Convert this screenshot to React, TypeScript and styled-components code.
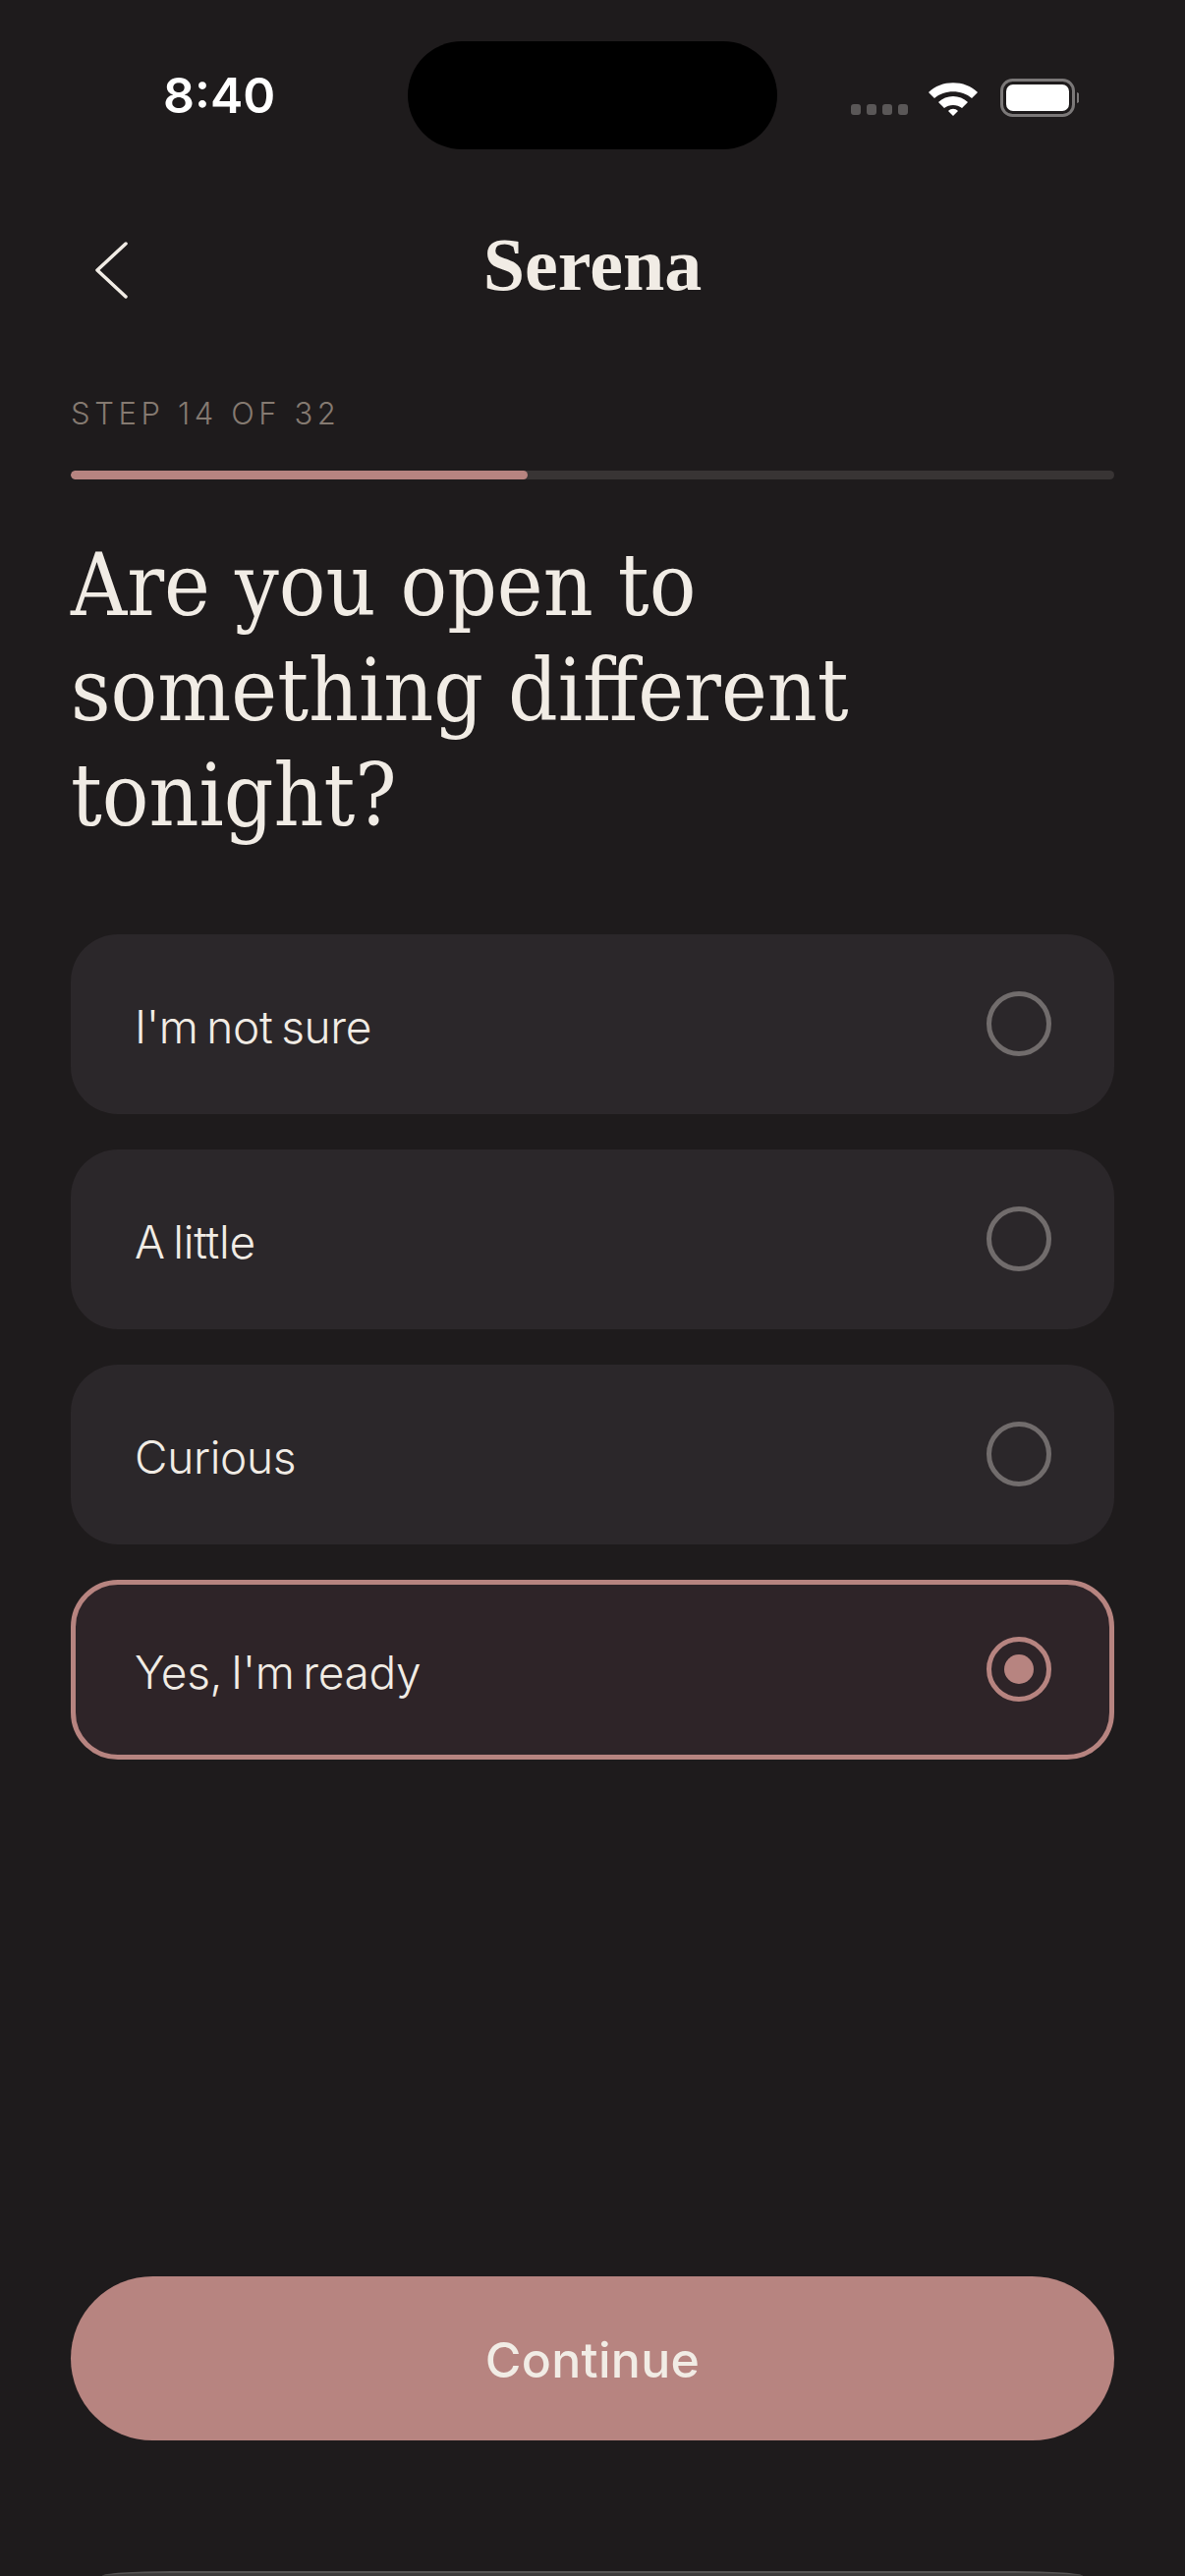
import React from 'react';
import styled, { createGlobalStyle } from 'styled-components';

const palette = {
    bg: '#1e1b1c',
    card: '#2b272a',
    cardActive: '#2e2428',
    rose: '#b78480',
    cream: '#f1ece5',
    muted: '#857a71',
    track: '#383434',
    ring: '#716c6c',
};

const GlobalStyle = createGlobalStyle`
    html, body {
        margin: 0;
        padding: 0;
        background: ${palette.bg};
    }
`;

const Screen = styled.div`
    width: 1206px;
    height: 2622px;
    overflow: hidden;
    background: ${palette.bg};
    display: flex;
    flex-direction: column;
    font-family: Inter, "Liberation Sans", sans-serif;
    color: ${palette.cream};
`;

const StatusBar = styled.div`
    height: 152px;
    padding-top: 42px;
    box-sizing: border-box;
    display: grid;
    grid-template-columns: 415px 376px 1fr;
    flex-shrink: 0;
`;

const Clock = styled.div`
    font-family: Inter, sans-serif;
    font-size: 50px;
    line-height: 110px;
    font-weight: 600;
    color: #fff;
    padding-left: 166px;
`;

const Island = styled.div`
    height: 110px;
    border-radius: 55px;
    background: #000;
`;

const StatusIcons = styled.div`
    display: flex;
    align-items: flex-start;
    padding: 38px 0 0 73px;
`;

const NavBar = styled.div`
    margin-top: 87px;
    padding: 0 72px;
    height: 60px;
    display: flex;
    align-items: center;
    justify-content: center;
    position: relative;
`;

const BackIcon = styled.svg`
    position: absolute;
    left: 96px;
    top: 6px;
`;

const Brand = styled.div`
    font-family: "Liberation Serif", serif;
    font-weight: 700;
    font-size: 76px;
    line-height: 60px;
`;

const StepLabel = styled.div`
    margin: 102px 72px 0;
    font-size: 31px;
    line-height: 40px;
    font-weight: 300;
    letter-spacing: 4.6px;
    color: ${palette.muted};
`;

const Track = styled.div`
    margin: 38px 72px 0;
    height: 9px;
    border-radius: 5px;
    background: ${palette.track};
    overflow: hidden;
`;

const Fill = styled.div`
    height: 100%;
    border-radius: 5px;
    background: ${palette.rose};
`;

const Question = styled.h1`
    margin: 54px 72px 0;
    font-family: "DejaVu Serif Condensed", "DejaVu Serif", serif;
    font-stretch: condensed;
    font-weight: 400;
    font-size: 88px;
    line-height: 107px;
    color: ${palette.cream};
`;

const Options = styled.div`
    margin: 88px 72px 0;
    display: flex;
    flex-direction: column;
    gap: 36px;
`;

const Option = styled.div<{ $selected?: boolean }>`
    height: 183px;
    box-sizing: border-box;
    border-radius: 48px;
    padding: 0 64px 0 65px;
    display: flex;
    align-items: center;
    justify-content: space-between;
    background: ${(p) => (p.$selected ? palette.cardActive : palette.card)};
    border: ${(p) => (p.$selected ? `5px solid ${palette.rose}` : 'none')};
    ${(p) => p.$selected && 'padding: 0 59px 0 60px;'}
`;

const OptionLabel = styled.span`
    font-size: 46px;
    font-weight: 300;
    letter-spacing: -0.3px;
    word-spacing: -4px;
    margin-top: 4px;
`;

const Radio = styled.span<{ $selected?: boolean }>`
    width: 66px;
    height: 66px;
    box-sizing: border-box;
    border-radius: 50%;
    border: 5px solid ${(p) => (p.$selected ? palette.rose : palette.ring)};
    display: flex;
    align-items: center;
    justify-content: center;
    margin-top: -1px;
`;

const RadioDot = styled.span`
    width: 30px;
    height: 30px;
    border-radius: 50%;
    background: ${palette.rose};
`;

const Spacer = styled.div`
    flex: 1;
`;

const ContinueButton = styled.button`
    margin: 0 72px;
    height: 167px;
    padding: 2px 0 0;
    flex-shrink: 0;
    border: none;
    border-radius: 84px;
    background: ${palette.rose};
    color: ${palette.cream};
    font-family: Inter, sans-serif;
    font-size: 50px;
    font-weight: 500;
    letter-spacing: 0.3px;
`;

const HomeEdge = styled.div`
    margin: 133px 104px 0;
    height: 5px;
    box-sizing: border-box;
    flex-shrink: 0;
    border-top: 2px solid #565454;
    border-radius: 70px 70px 0 0 / 5px 5px 0 0;
    background: #3d3b3b;
`;

const options = ["I'm not sure", 'A little', 'Curious', "Yes, I'm ready"];

const App: React.FC = () => {
    return (
        <Screen>
            <GlobalStyle />
            <StatusBar>
                <Clock>8:40</Clock>
                <Island />
                <StatusIcons>
                    <svg width="234" height="46" viewBox="0 0 234 46">
                        <g fill="#5a5757">
                            <rect x="2" y="26" width="10" height="11" rx="3" />
                            <rect x="18" y="26" width="10" height="11" rx="3" />
                            <rect x="34" y="26" width="10" height="11" rx="3" />
                            <rect x="50" y="26" width="10" height="11" rx="3" />
                        </g>
                        <g fill="#fff">
                            <path d="M81 14 C94 1 118 1 131 14 L125 20 C115 11 97 11 87 20 Z" />
                            <path d="M91 24 C99 16 113 16 121 24 L115 30 C110 26 102 26 97 30 Z" />
                            <path d="M101 33 C104 30 108 30 111 33 L106 38 Z" />
                        </g>
                        <rect x="155.5" y="1.5" width="73" height="36" rx="11" fill="none" stroke="#7b7878" strokeWidth="3" />
                        <rect x="160" y="6" width="64" height="27" rx="7" fill="#fff" />
                        <path d="M232 14 C235 15 236 17 236 20 C236 22 235 24 232 25 Z" fill="#7b7878" />
                    </svg>
                </StatusIcons>
            </StatusBar>
            <NavBar>
                <BackIcon width="40" height="60" viewBox="0 0 40 60">
                    <path d="M32 3 L3 30 L32 57" fill="none" stroke={palette.cream} strokeWidth="3.5" strokeLinecap="round" strokeLinejoin="round" />
                </BackIcon>
                <Brand>Serena</Brand>
            </NavBar>
            <StepLabel>STEP 14 OF 32</StepLabel>
            <Track>
                <Fill style={{ width: `${(14 / 32) * 100}%` }} />
            </Track>
            <Question>
                Are you open to
                <br />
                something different
                <br />
                tonight?
            </Question>
            <Options>
                {options.map((label, i) => {
                    const selected = i === options.length - 1;
                    return (
                        <Option key={label} $selected={selected}>
                            <OptionLabel>{label}</OptionLabel>
                            <Radio $selected={selected}>{selected && <RadioDot />}</Radio>
                        </Option>
                    );
                })}
            </Options>
            <Spacer />
            <ContinueButton>Continue</ContinueButton>
            <HomeEdge />
        </Screen>
    );
};

export default App;
